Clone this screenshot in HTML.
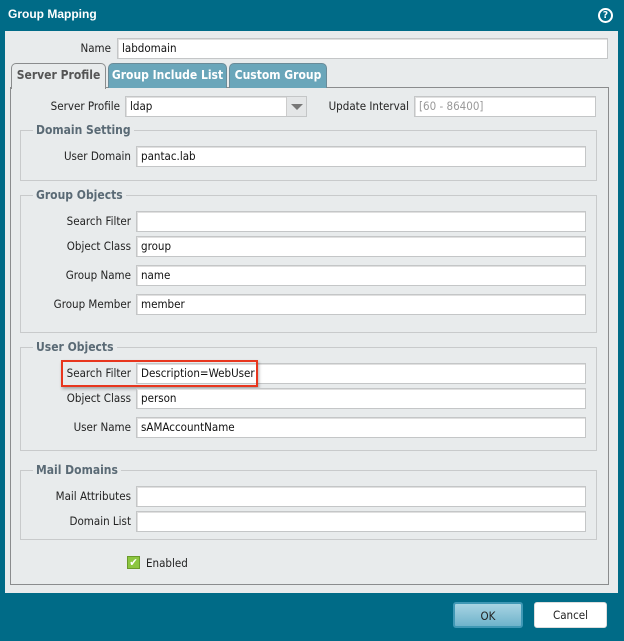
<!DOCTYPE html>
<html><head><meta charset="utf-8"><style>
*{box-sizing:border-box;margin:0;padding:0}
body{width:624px;height:641px;background:#006b87;position:relative;overflow:hidden;font-family:"DejaVu Sans Condensed","DejaVu Sans","Liberation Sans",sans-serif;font-stretch:condensed;font-size:11px;color:#222}
.a{position:absolute}
.title{left:8px;top:7px;color:#fff;font-weight:bold;font-size:12px;font-family:"Liberation Sans",sans-serif}
.help{left:598px;top:8px;width:15px;height:15px;border:2px solid #fff;border-radius:50%;color:#fff;font-weight:bold;font-size:10px;text-align:center;line-height:11px}
.body{left:5px;top:31px;width:613px;height:562px;background:#e8ebec}
.inp{position:absolute;height:21px;background:#fff;border:1px solid #c4c6c7;box-shadow:inset 1px 1px 0 #e0e0e0;padding:3px 4px;font-size:11.5px;line-height:13px;color:#111}
.lbl{position:absolute;text-align:right;width:200px;font-size:11.5px;line-height:21px;color:#222}
.panel{left:10px;top:87px;width:599px;height:498px;border:1px solid #8a8c8d}
.fs{position:absolute;left:20px;width:577px;border:1px solid #c8cacb}
.lg{position:absolute;left:33px;background:#e8ebec;padding:0 3px;font-weight:bold;color:#5a6a75;font-size:12px;line-height:14px}
.tab{position:absolute;top:63px;height:25px;border:1px solid #6a8b98;border-bottom:none;border-radius:5px 5px 0 0;font-weight:bold;font-size:12px;line-height:23px;text-align:center;color:#fff;background:#6aa6ba}
.btn{position:absolute;top:602px;height:26px;border-radius:3px;text-align:center;line-height:24px;font-size:11.5px}
</style></head><body>
<div class="a title">Group Mapping</div>
<div class="a help">?</div>
<div class="a body"></div>
<div class="lbl" style="left:-89px;top:38px">Name</div>
<div class="inp" style="left:117px;top:38px;width:491px">labdomain</div>
<div class="a panel"></div>
<div class="tab" style="left:11px;width:95px;background:#e8ebec;color:#555;border-color:#8a8c8d;height:26px">Server Profile</div>
<div class="tab" style="left:108px;width:119px">Group Include List</div>
<div class="tab" style="left:229px;width:98px">Custom Group</div>
<div class="lbl" style="left:-80px;top:96px">Server Profile</div>
<div class="inp" style="left:125px;top:96px;width:182px">ldap</div>
<div class="a" style="left:286px;top:97px;width:20px;height:19px;background:#e4e6e7;border-left:1px solid #ccc"><div style="margin:7px 0 0 4px;width:0;height:0;border-left:6px solid transparent;border-right:6px solid transparent;border-top:6px solid #777"></div></div>
<div class="lbl" style="left:209px;top:96px">Update Interval</div>
<div class="inp" style="left:414px;top:96px;width:182px;color:#999">[60 - 86400]</div>

<div class="fs" style="top:130px;height:51px"></div><div class="lg" style="top:123px">Domain Setting</div>
<div class="lbl" style="left:-69px;top:146px">User Domain</div>
<div class="inp" style="left:136px;top:146px;width:450px">pantac.lab</div>

<div class="fs" style="top:195px;height:138px"></div><div class="lg" style="top:188px">Group Objects</div>
<div class="lbl" style="left:-69px;top:211px">Search Filter</div><div class="inp" style="left:136px;top:211px;width:450px"></div>
<div class="lbl" style="left:-69px;top:236px">Object Class</div><div class="inp" style="left:136px;top:236px;width:450px">group</div>
<div class="lbl" style="left:-69px;top:265px">Group Name</div><div class="inp" style="left:136px;top:265px;width:450px">name</div>
<div class="lbl" style="left:-69px;top:294px">Group Member</div><div class="inp" style="left:136px;top:294px;width:450px">member</div>

<div class="fs" style="top:347px;height:104px"></div><div class="lg" style="top:340px">User Objects</div>
<div class="lbl" style="left:-69px;top:363px">Search Filter</div><div class="inp" style="left:136px;top:363px;width:450px">Description=WebUser</div>
<div class="a" style="left:61px;top:360px;width:197px;height:27px;border:2px solid #e8361e;box-shadow:1px 2px 3px rgba(0,0,0,.3)"></div>
<div class="lbl" style="left:-69px;top:388px">Object Class</div><div class="inp" style="left:136px;top:388px;width:450px">person</div>
<div class="lbl" style="left:-69px;top:417px">User Name</div><div class="inp" style="left:136px;top:417px;width:450px">sAMAccountName</div>

<div class="fs" style="top:470px;height:70px"></div><div class="lg" style="top:463px">Mail Domains</div>
<div class="lbl" style="left:-69px;top:486px">Mail Attributes</div><div class="inp" style="left:136px;top:486px;width:450px"></div>
<div class="lbl" style="left:-69px;top:511px">Domain List</div><div class="inp" style="left:136px;top:511px;width:450px"></div>

<div class="a" style="left:127px;top:556px;width:13px;height:13px;background:#8cc63f;border:1px solid #6a9a2a;color:#fff;font-size:11px;line-height:11px;text-align:center;font-weight:bold">✔</div>
<div class="a" style="left:146px;top:556px;line-height:14px;font-size:11.5px">Enabled</div>

<div class="btn" style="left:453px;width:70px;background:linear-gradient(#a8d4e3,#6fb3cb);border:2px solid #3f98b5;color:#222">OK</div>
<div class="btn" style="left:534px;width:73px;background:#fff;border:1px solid #ddd;color:#222">Cancel</div>
</body></html>
